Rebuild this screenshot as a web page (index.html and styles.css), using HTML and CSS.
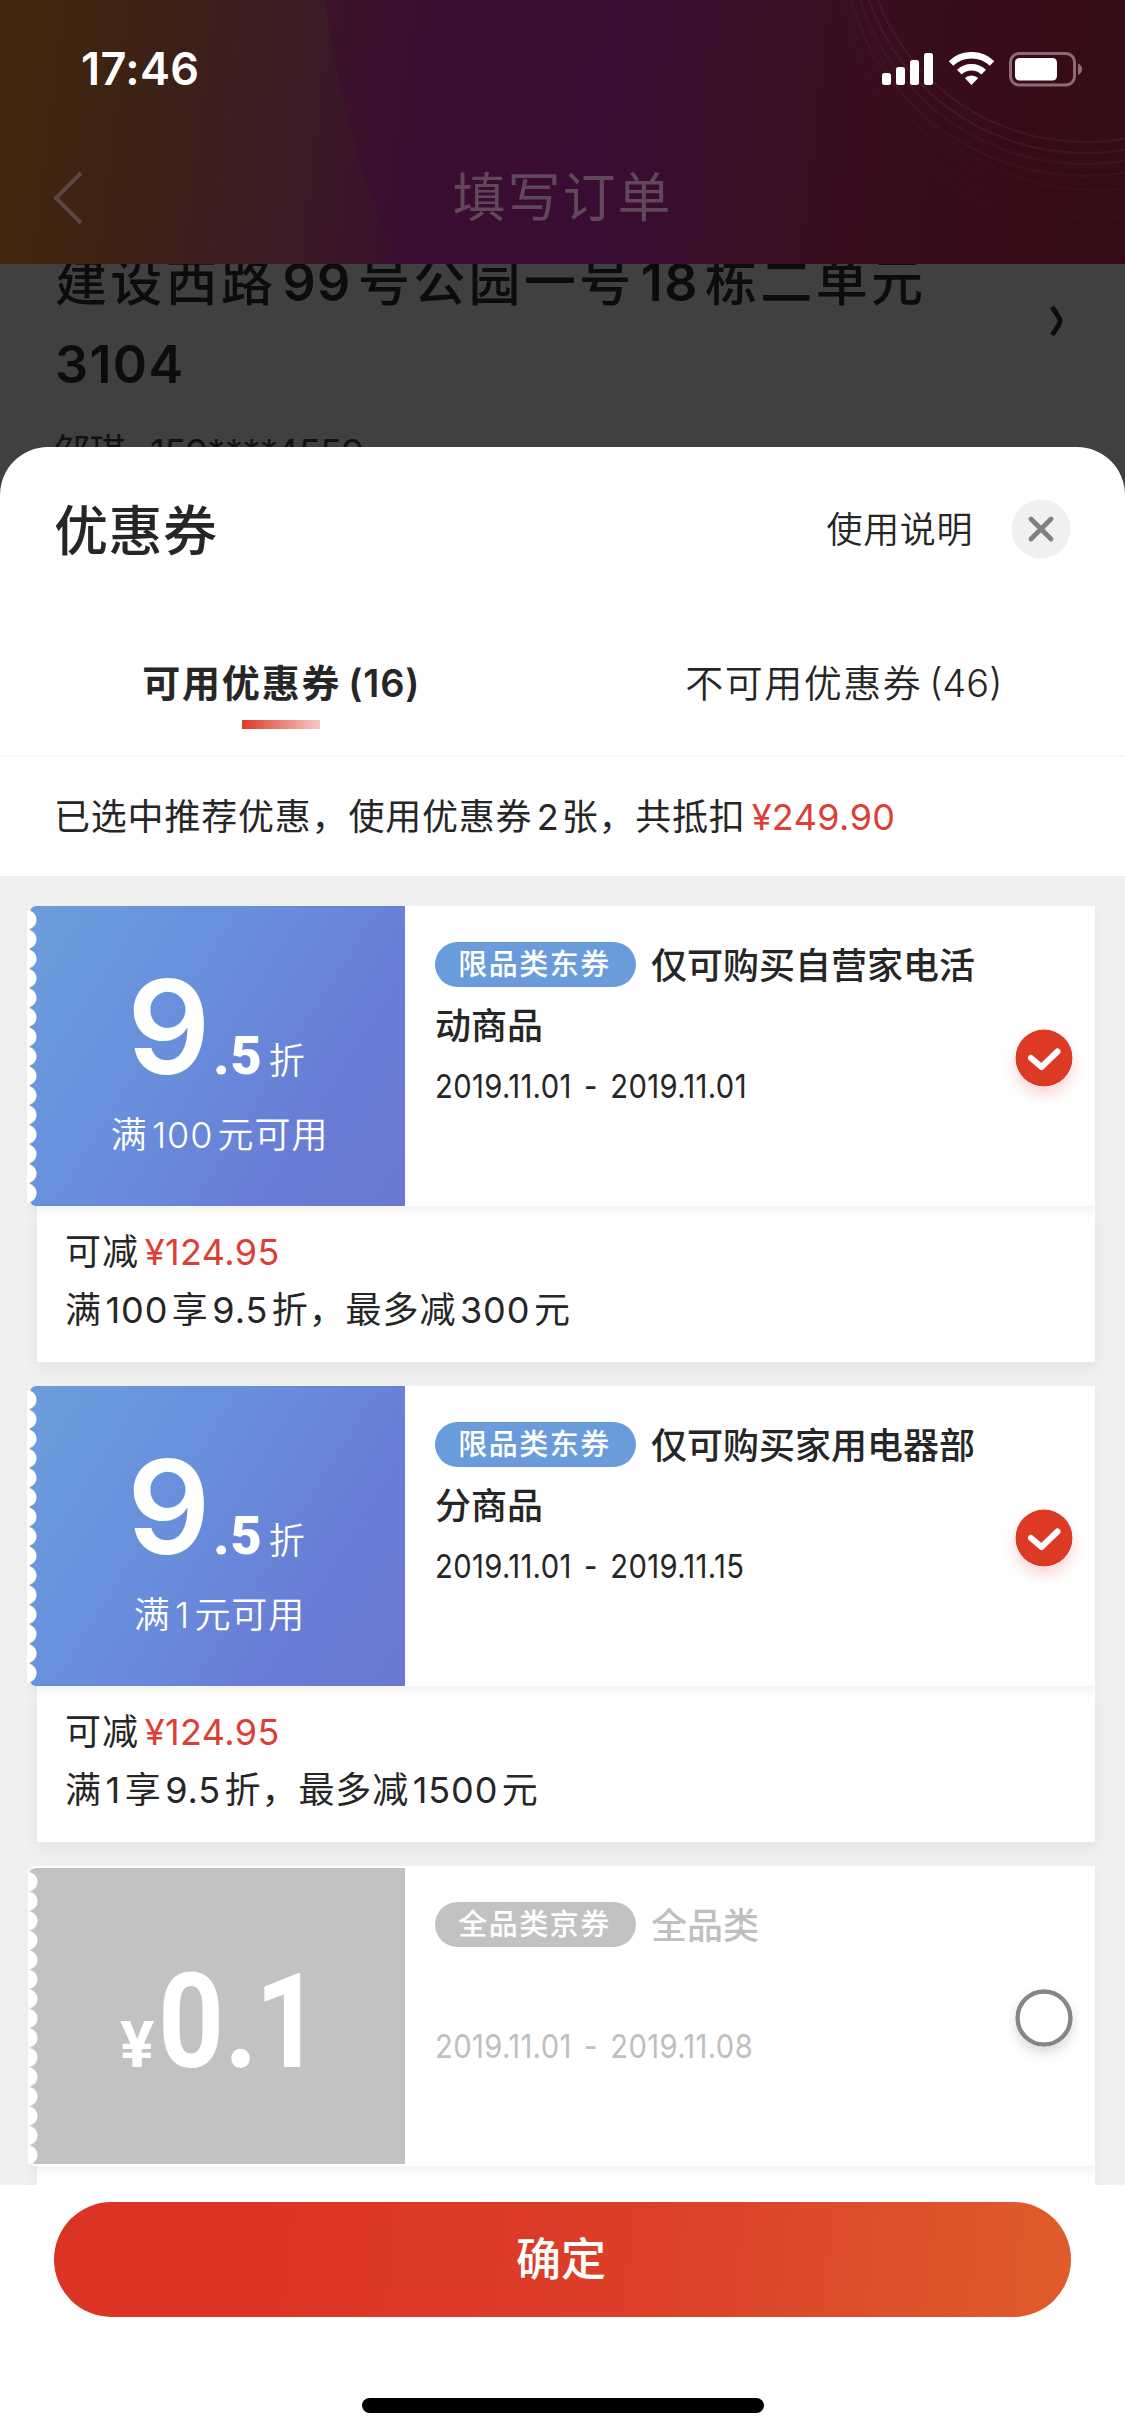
FILE: index.html
```html
<!DOCTYPE html>
<html lang="zh-CN">
<head>
<meta charset="utf-8">
<title>优惠券</title>
<link rel="stylesheet" href="styles.css">
</head>
<body>
<main class="phone">
  <section class="backdrop">
    <header class="header">
      <svg class="swirl" viewBox="0 0 1125 264" aria-hidden="true">
        <defs>
          <linearGradient id="band" x1="0" x2="1" y1="0" y2="0"><stop offset="0" stop-color="#3c0633" stop-opacity=".38"/><stop offset="1" stop-color="#3a1038" stop-opacity="0"/></linearGradient>
        </defs>
        <path d="M325 0Q345 150 400 264H760Q640 120 600 0Z" fill="url(#band)"/>
        <g fill="none" stroke="#5a3045" stroke-width="2" opacity=".3">
          <circle cx="1085" cy="-80" r="222"/><circle cx="1085" cy="-76" r="229"/>
          <circle cx="1085" cy="-72" r="236" opacity=".7"/><circle cx="1085" cy="-68" r="244" opacity=".6"/>
          <circle cx="1095" cy="-50" r="240" opacity=".4"/><circle cx="1095" cy="-40" r="243" opacity=".3"/>
          <circle cx="1095" cy="-30" r="248" opacity=".3"/><circle cx="1095" cy="-20" r="250" opacity=".3"/>
        </g>
      </svg>
      <div class="status">
        <span class="time">17:46</span>
        <svg class="status-icons" viewBox="0 0 204 36" aria-hidden="true">
          <g fill="#fff">
            <rect x="0" y="21" width="9" height="12" rx="2.5"/>
            <rect x="14" y="15" width="9" height="18" rx="2.5"/>
            <rect x="28" y="8" width="9" height="25" rx="2.5"/>
            <rect x="42" y="1" width="9" height="32" rx="2.5"/>
            <path d="M89.500 33l-6.700-6.900a9.600 9.600 0 0 1 13.400 0z"/>
          </g>
          <g fill="none" stroke="#fff" stroke-width="6.500">
            <path d="M69 11.500a29.500 29.500 0 0 1 41 0"/>
            <path d="M77.300 20.200a17.500 17.500 0 0 1 24.400 0"/>
          </g>
          <rect x="128.500" y="1.500" width="64" height="31.500" rx="8.500" fill="none" stroke="#8f6b78" stroke-width="3"/>
          <rect x="133" y="6" width="42" height="22.500" rx="4.500" fill="#fff"/>
          <path d="M196 11.500q4 1.500 4 5.700t-4 5.700z" fill="#8f6b78"/>
        </svg>
      </div>
      <div class="nav">
        <svg class="back" viewBox="0 0 32 54" aria-hidden="true"><path d="M29 2 4 27l25 25" fill="none" stroke="#5c4745" stroke-width="4"/></svg>
        <h1 class="nav-title">填写订单</h1>
      </div>
    </header>
    <div class="address">
      <p class="address-line">建设西路<span class="n">99</span>号公园一号<span class="n">18</span>栋二单元<br><span class="room">3104</span></p>
      <svg class="go" viewBox="0 0 16 32" aria-hidden="true"><path d="M3 2q8 11 8 14t-8 14" fill="none" stroke="#0c0c0c" stroke-width="4.800"/></svg>
    </div>
    <p class="contact">邹琪<span class="phone-no">159****4559</span></p>
  </section>

  <section class="sheet">
    <div class="sheet-head">
      <h2 class="sheet-title">优惠券</h2>
      <span class="help">使用说明</span>
      <svg class="close" viewBox="0 0 60 60" aria-hidden="true"><circle cx="30" cy="30" r="29.500" fill="#f0f0f0"/><path d="M20 20l20 20M40 20L20 40" stroke="#808080" stroke-width="4.800" stroke-linecap="round"/></svg>
    </div>
    <nav class="tabs">
      <div class="tab tab-on"><span>可用优惠券<span class="count">(16)</span></span><i class="bar"></i></div>
      <div class="tab"><span>不可用优惠券<span class="count">(46)</span></span></div>
    </nav>
    <p class="notice">已选中推荐优惠，使用优惠券<span class="n">2</span>张，共抵扣<span class="money">¥249.90</span></p>

    <div class="list">
      <article class="coupon">
        <div class="main">
          <div class="value">
            <p class="rate"><b class="big">9</b><b class="dec">.5</b><span class="unit">折</span></p>
            <p class="limit">满<span class="n">100</span>元可用</p>
          </div>
          <div class="info">
            <div class="texts">
              <h3 class="name"><span class="tag">限品类东券</span>仅可购买自营家电活动商品</h3>
              <p class="dates"><span>2019.11.01</span><span class="dash">-</span><span>2019.11.01</span></p>
            </div>
            <svg class="check" viewBox="0 0 58 58" aria-hidden="true"><circle cx="29" cy="29" r="28.500" fill="#dd3a26"/><path d="M16 29l10.500 9 16-15.500" fill="none" stroke="#fff" stroke-width="6" stroke-linecap="round" stroke-linejoin="round"/></svg>
          </div>
        </div>
        <div class="extra">
          <p>可减<span class="money">¥124.95</span></p>
          <p>满<span class="n">100</span>享<span class="n">9.5</span>折，最多减<span class="n">300</span>元</p>
        </div>
      </article>

      <article class="coupon">
        <div class="main">
          <div class="value">
            <p class="rate"><b class="big">9</b><b class="dec">.5</b><span class="unit">折</span></p>
            <p class="limit">满<span class="n">1</span>元可用</p>
          </div>
          <div class="info">
            <div class="texts">
              <h3 class="name"><span class="tag">限品类东券</span>仅可购买家用电器部分商品</h3>
              <p class="dates"><span>2019.11.01</span><span class="dash">-</span><span>2019.11.15</span></p>
            </div>
            <svg class="check" viewBox="0 0 58 58" aria-hidden="true"><circle cx="29" cy="29" r="28.500" fill="#dd3a26"/><path d="M16 29l10.500 9 16-15.500" fill="none" stroke="#fff" stroke-width="6" stroke-linecap="round" stroke-linejoin="round"/></svg>
          </div>
        </div>
        <div class="extra">
          <p>可减<span class="money">¥124.95</span></p>
          <p>满<span class="n">1</span>享<span class="n">9.5</span>折，最多减<span class="n">1500</span>元</p>
        </div>
      </article>

      <article class="coupon coupon-off">
        <div class="main">
          <div class="value">
            <p class="price"><b class="yen">¥</b><b class="amount">0.<span class="one">1</span></b></p>
          </div>
          <div class="info">
            <div class="texts">
              <h3 class="name"><span class="tag">全品类京券</span>全品类</h3>
              <p class="dates"><span>2019.11.01</span><span class="dash">-</span><span>2019.11.08</span></p>
            </div>
            <svg class="check" viewBox="0 0 58 58" aria-hidden="true"><circle cx="29" cy="29" r="26.500" fill="#fff" stroke="#868686" stroke-width="4.500"/></svg>
          </div>
        </div>
        <div class="extra"></div>
      </article>
    </div>

    <footer class="footer">
      <button class="confirm">确定</button>
      <i class="home"></i>
    </footer>
  </section>
</main>
</body>
</html>
```

FILE: styles.css
```css
* { box-sizing: border-box; margin: 0; padding: 0; }
body {
  width: 1125px;
  background: #404040;
  font-family: Inter, "Noto Sans CJK SC", sans-serif;
  color: #262626;
}
.phone { display: flex; flex-direction: column; height: 2436px; overflow: hidden; }

/* dimmed order page */
.backdrop { height: 447px; overflow: hidden; flex: none; }
.header {
  position: relative;
  height: 264px;
  background: linear-gradient(97deg, #42290d 0%, #3d2115 14%, #3a1b26 28%, #3a0e2f 38%, #390c33 54%, #3a0e25 68%, #380d1a 82%, #350b15 100%);
}
.swirl { position: absolute; inset: 0; width: 1125px; height: 264px; }
.status { position: relative; display: flex; justify-content: space-between; height: 132px; padding: 41px 42px 0 81px; }
.time { font-size: 45px; font-weight: 600; line-height: 56px; letter-spacing: .4px; color: #fff; }
.status-icons { width: 204px; height: 36px; margin-top: 11px; margin-right: -3px; }
.nav { position: relative; display: flex; align-items: center; height: 132px; padding: 0 52px; }
.back { width: 32px; height: 54px; }
.nav-title { flex: 1; padding-right: 32px; text-align: center; font-size: 53px; font-weight: 400; line-height: 64px; letter-spacing: 2px; color: #5f4858; }
.address { display: flex; justify-content: space-between; height: 142px; padding: 0 60px 0 55px; }
.address-line { margin-top: -22px; font-size: 52px; font-weight: 500; line-height: 82px; letter-spacing: 3.300px; color: #0c0c0c; }
.address-line span { font-weight: 600; letter-spacing: 1.4px; }
.go { width: 16px; height: 32px; margin-top: 41px; }
.contact { padding-left: 54px; margin-top: 21px; font-size: 36px; line-height: 50px; letter-spacing: -.5px; color: #111; }
.phone-no { margin-left: 25px; }
.n { margin: 0 .12em; }

/* coupon sheet */
.sheet { display: flex; flex-direction: column; flex: 1; min-height: 0; background: #fff; border-radius: 48px 48px 0 0; }
.sheet-head { display: flex; align-items: center; height: 166px; padding: 0 54px; flex: none; }
.sheet-title { flex: 1; padding-top: 3px; font-size: 54px; font-weight: 500; line-height: 64px; letter-spacing: .5px; }
.help { font-size: 36px; letter-spacing: .6px; line-height: 50px; font-weight: 350; }
.close { width: 60px; height: 60px; margin-left: 38px; margin-right: 0; margin-top: -3px; }
.tabs { display: flex; height: 144px; border-bottom: 2px solid #f9f9f9; flex: none; }
.tab { display: flex; flex-direction: column; align-items: center; flex: 1; padding-top: 46px; font-size: 38px; font-weight: 350; letter-spacing: 1.500px; line-height: 48px; }
.tab-on { font-weight: 600; letter-spacing: 1.800px; }
.count { margin-left: 7px; letter-spacing: 0; }
.tab-on .count { letter-spacing: .8px; }
.bar { width: 78px; height: 9px; margin-top: 13px; background: linear-gradient(90deg, #dd3a26, #f7c9c4); }
.notice { height: 119px; padding: 35px 54px 0; font-size: 36px; line-height: 50px; letter-spacing: .8px; flex: none; }
.notice .n { margin: 0 .06em 0 .12em; }
.money { margin-left: 6px; color: #dd3f35; letter-spacing: .4px; }

.list { flex: 1; min-height: 0; overflow: hidden; padding: 30px 30px 0; background: #f0f0f0; }
.coupon { margin-bottom: 24px; }
.main { position: relative; display: flex; height: 300px; background: #fff; box-shadow: 0 6px 8px rgba(0, 0, 0, .05); border-radius: 6px 0 0 6px; }
.value {
  position: relative;
  display: flex;
  flex-direction: column;
  align-items: center;
  width: 375px;
  flex: none;
  border-radius: 6px 0 0 6px;
  background: linear-gradient(122deg, #6a9cdc 5%, #688fdc 40%, #697cd6 75%, #6b78d0 100%);
  color: #fff;
}
.value::before {
  content: "";
  position: absolute;
  left: -3px;
  top: 4px;
  width: 12px;
  height: 293px;
  background: radial-gradient(circle at 0 50%, #fff 9px, rgba(255, 255, 255, 0) 10px) 0 0 / 12px 19.530px repeat-y;
}
.rate { display: flex; align-items: baseline; height: 204px; padding-top: 41px; margin-left: -3px; line-height: 160px; }
.big { font-size: 130px; font-weight: 570; width: 86px; }
.dec { font-family: Roboto, sans-serif; font-size: 54px; font-weight: 900; letter-spacing: 1px; }
.unit { font-size: 36px; margin-left: 6px; font-weight: 350; }
.limit { font-size: 36px; line-height: 50px; letter-spacing: .9px; margin-left: 4px; font-weight: 350; }
.info { display: flex; align-items: center; flex: 1; padding: 0 22px 0 30px; }
.texts { flex: 1; height: 300px; padding-top: 30px; }
.name { width: 560px; font-size: 36px; font-weight: 500; line-height: 60px; }
.tag {
  display: inline-block;
  width: 201px;
  height: 45px;
  padding-right: 2px;
  margin-right: 15px;
  border-radius: 23px;
  background: #6a9cdb;
  color: #fff;
  font-size: 29px;
  font-weight: 500;
  line-height: 45px;
  letter-spacing: 1.500px;
  text-align: center;
  vertical-align: 4px;
}
.dates { width: 400px; font-size: 33px; line-height: 60px; letter-spacing: .4px; transform: scaleX(.885); transform-origin: 0 50%; white-space: nowrap; }
.dash { margin: 0 14px; }
.check { width: 58px; height: 58px; margin-top: 3px; border-radius: 50%; box-shadow: 0 8px 14px rgba(221, 58, 38, .2); }
.extra { height: 156px; margin-left: 7px; padding: 17px 28px 0; background: #fff; box-shadow: 0 8px 16px rgba(0, 0, 0, .05); font-size: 36px; line-height: 58px; letter-spacing: .9px; }
.extra .n { margin: 0 .1em; }
.extra .money { letter-spacing: .4px; }

.coupon-off .value { background: #c2c2c2; border-top: 2px solid #fff; border-bottom: 2px solid #fff; }
.coupon-off .value::before { left: -2px; }
.coupon-off .tag { background: #c2c2c2; }
.coupon-off .name, .coupon-off .dates { color: #bfbfbf; }
.coupon-off .name { height: 120px; }
.coupon-off .check { box-shadow: 0 6px 12px rgba(0, 0, 0, .14); }
.price { display: flex; align-items: baseline; align-self: flex-start; margin: 79px 0 0 90px; font-family: Roboto, sans-serif; }
.yen { font-size: 64px; }
.amount { margin-left: 4px; font-size: 131px; line-height: 150px; transform: scaleX(.88); transform-origin: 0 50%; }
.one { margin-left: -3px; }

.footer { display: flex; flex-direction: column; align-items: center; height: 251px; padding-top: 17px; background: #fff; flex: none; }
.confirm { width: 1017px; height: 115px; padding-right: 3px; border: 0; border-radius: 58px; background: linear-gradient(96deg, #dc3424 20%, #dc4029 60%, #df5c2b 100%); color: #fff; font: 500 45px/115px Inter, "Noto Sans CJK SC", sans-serif; }
.home { width: 402px; height: 15px; margin-top: 81px; border-radius: 8px; background: #000; }
```
